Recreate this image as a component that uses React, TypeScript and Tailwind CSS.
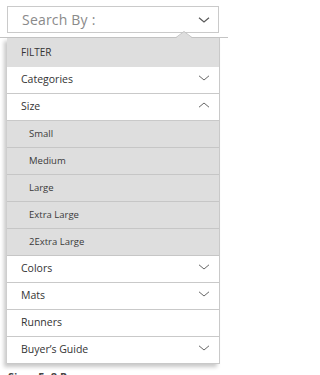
import React from "react";

const Chevron = ({ up = false }: { up?: boolean }) => (
  <svg width="12" height="6" viewBox="0 0 12 6" className="mr-[9px] -mt-[5px]">
    <path
      d={up ? "M1 5.2 L6 1 L11 5.2" : "M1 0.8 L6 5 L11 0.8"}
      fill="none"
      stroke="#666"
      strokeWidth="1"
    />
  </svg>
);

const Row = ({ label, icon }: { label: string; icon?: "down" | "up" }) => (
  <div className="h-[27px] flex items-center justify-between border-b border-[#c9c9c9] bg-white pl-[14px]">
    <span className="text-[10.5px] text-[#333]">{label}</span>
    {icon && <Chevron up={icon === "up"} />}
  </div>
);

const SubRow = ({ label }: { label: string }) => (
  <div className="h-[27px] flex items-center border-b border-[#c6c6c6] bg-[#dedede] pl-[22px]">
    <span className="text-[9.5px] text-[#3a3a3a]">{label}</span>
  </div>
);

export default function App() {
  return (
    <div
      className="relative w-[228px] h-[375px] overflow-hidden bg-white"
      style={{ fontFamily: '"Open Sans", "Noto Sans", sans-serif' }}
    >
      <div className="pt-[6px] pl-[7px]">
        <div className="w-[212px] h-[27px] border border-[#cacaca] flex items-center justify-between pl-[14px]">
          <span className="text-[14px] text-[#8a8a8a] tracking-[0.2px]">Search By :</span>
          <svg width="12" height="6" viewBox="0 0 12 6" className="mr-[8px]">
            <path d="M1 0.8 L6 5 L11 0.8" fill="none" stroke="#5a5a5a" strokeWidth="1.2" />
          </svg>
        </div>
      </div>
      <div className="relative mt-[4px] border-t border-[#c4c4c4]">
        <svg
          width="16"
          height="7"
          viewBox="0 0 16 7"
          className="absolute left-[176px] -top-[7px]"
        >
          <path d="M0 7 L8 0.5 L16 7 Z" fill="#dedede" />
          <path d="M0 6.5 L8 0.5 L16 6.5" fill="none" stroke="#c4c4c4" strokeWidth="1" />
        </svg>
        <div className="ml-[7px] w-[213px] border-r border-[#c9c9c9] shadow-[-3px_3px_4px_rgba(0,0,0,0.22)]">
          <div className="h-[29px] flex items-center bg-[#dedede] pl-[14px]">
            <span className="text-[10px] text-[#333]">FILTER</span>
          </div>
          <Row label="Categories" icon="down" />
          <Row label="Size" icon="up" />
          <SubRow label="Small" />
          <SubRow label="Medium" />
          <SubRow label="Large" />
          <SubRow label="Extra Large" />
          <SubRow label="2Extra Large" />
          <Row label="Colors" icon="down" />
          <Row label="Mats" icon="down" />
          <Row label="Runners" />
          <Row label="Buyer’s Guide" icon="down" />
        </div>
        <div className="pl-[8px] mt-[6px] text-[11px] font-bold text-[#444] leading-[14px]">
          Size : 5x8 Rugs
        </div>
      </div>
    </div>
  );
}
